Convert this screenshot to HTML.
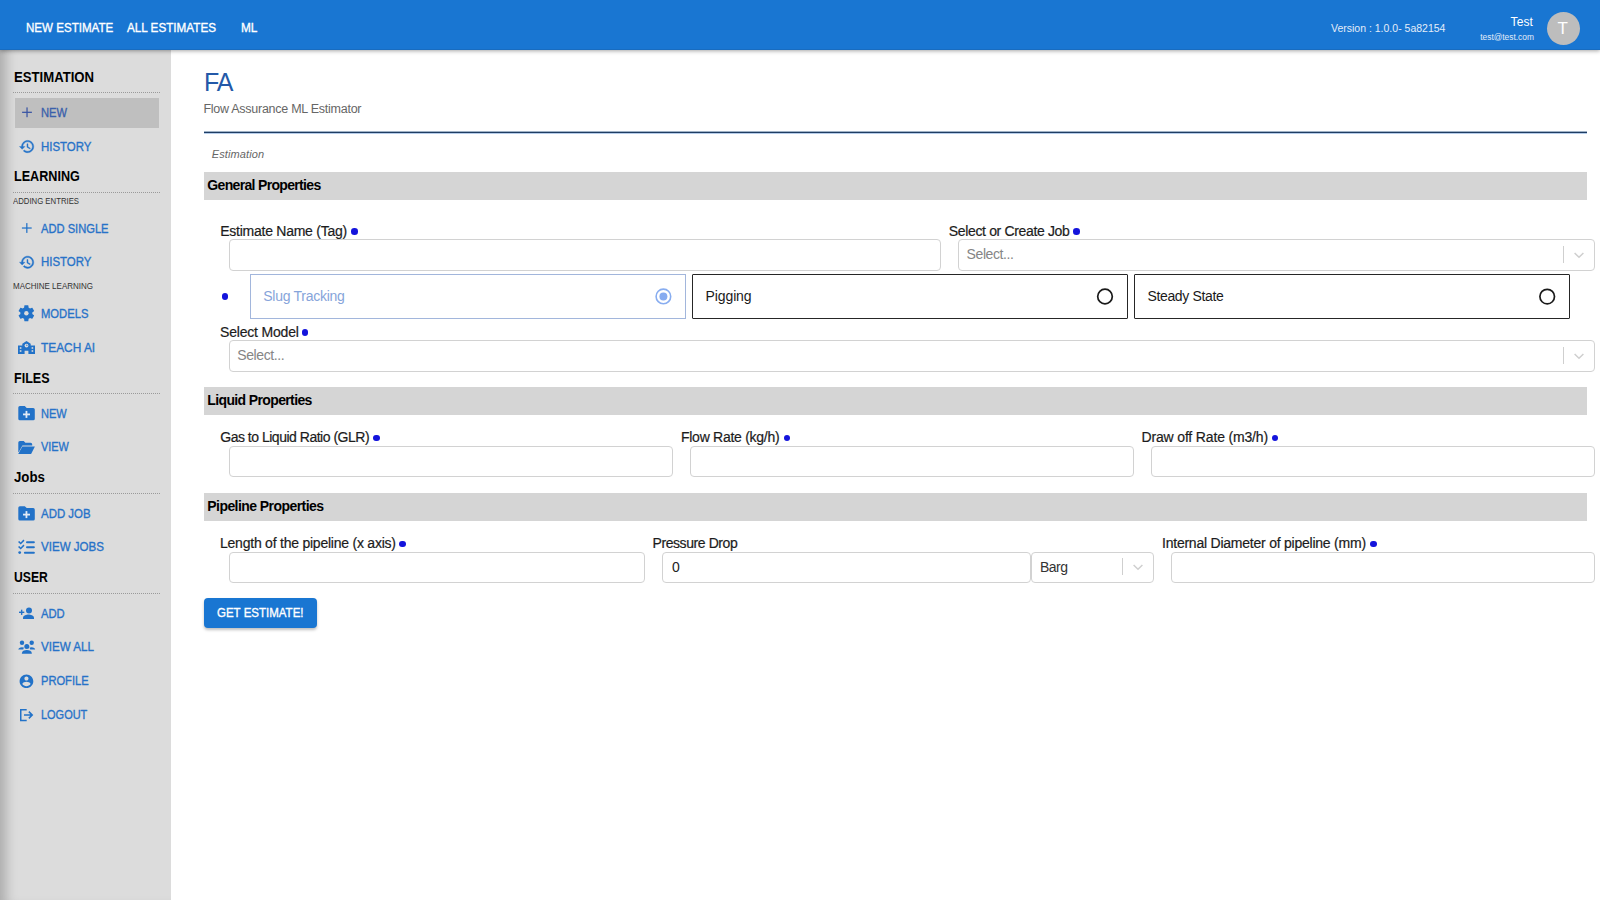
<!DOCTYPE html><html><head><meta charset="utf-8"><style>
*{box-sizing:border-box;margin:0;padding:0}
html,body{width:1600px;height:900px;overflow:hidden;background:#fff;font-family:"Liberation Sans",sans-serif}
body{position:relative}
.t{position:absolute;white-space:nowrap;line-height:1}
#hdr{position:absolute;left:0;top:0;width:1600px;height:50px;background:#1976d2;border-bottom:1px solid #186cc0;box-shadow:0 1px 4px rgba(0,0,0,.35);z-index:5}
.n{color:#fff;font-size:13px;font-weight:400;-webkit-text-stroke:.35px #fff;transform-origin:0 0}
#side{position:absolute;left:0;top:50px;width:171px;height:850px;background:#dcdcdc;box-shadow:inset 14px 0 12px -8px rgba(0,0,0,.22)}
.h{font-size:14px;font-weight:700;color:#000;transform-origin:0 0}
.dl{position:absolute;left:13px;width:147px;height:1px;background:repeating-linear-gradient(90deg,#9a9a9a 0 1px,transparent 1px 2px)}
.sub{font-size:9px;color:#333;transform-origin:0 0}
.it{font-size:13px;font-weight:400;color:#2772c8;-webkit-text-stroke:.35px currentColor;transform-origin:0 0}
.lbl{font-size:14px;color:#1c1c1c;-webkit-text-stroke:.2px currentColor}
.dot{position:absolute;width:6.6px;height:6.6px;border-radius:50%;background:#1414dc}
.inp{position:absolute;height:31px;border:1px solid #d2d2d2;border-radius:4px;background:#fff}
.band{position:absolute;left:204px;width:1383px;height:28px;background:#d5d5d5}
.bt{font-size:14px;font-weight:700;color:#000;transform-origin:0 0}
.sep{position:absolute;width:1px;height:17px;background:#cfcfcf}
.rb{position:absolute;top:274px;height:45px;border:1.6px solid #262626;border-radius:1px;background:#fff}
.ph{font-size:14px;color:#858585;letter-spacing:-.42px}
</style></head><body>
<div id="hdr">
<div class="t n" style="left:26.1px;top:21.2px;transform:scaleX(.89)">NEW ESTIMATE</div>
<div class="t n" style="left:126.8px;top:21.2px;transform:scaleX(.899)">ALL ESTIMATES</div>
<div class="t n" style="left:241px;top:21.2px;transform:scaleX(.91)">ML</div>
<div class="t" style="left:1331px;top:23.12px;font-size:10.5px;color:#e3edf9">Version : 1.0.0- 5a82154</div>
<div class="t" style="left:1510.5px;top:15.95px;font-size:12px;color:#fff;letter-spacing:.15px">Test</div>
<div class="t" style="left:1480.3px;top:32.79px;font-size:8.4px;color:#e3edf9">test@test.com</div>
<div style="position:absolute;left:1546.5px;top:11.6px;width:33.4px;height:33.4px;border-radius:50%;background:#bdbdbd"></div>
<div class="t" style="left:1557.5px;top:19.82px;font-size:17px;color:#fff">T</div>
</div>
<div id="side"></div>
<div class="t h" style="left:13.5px;top:69.86px;transform:scaleX(0.938)">ESTIMATION</div>
<div class="t h" style="left:13.5px;top:169.46px;transform:scaleX(0.901)">LEARNING</div>
<div class="t h" style="left:13.5px;top:370.86px;transform:scaleX(0.895)">FILES</div>
<div class="t h" style="left:13.5px;top:470.36px;transform:scaleX(0.944)">Jobs</div>
<div class="t h" style="left:13.5px;top:570.36px;transform:scaleX(0.868)">USER</div>
<div class="dl" style="top:92px"></div>
<div class="dl" style="top:192px"></div>
<div class="dl" style="top:393px"></div>
<div class="dl" style="top:493px"></div>
<div class="dl" style="top:593px"></div>
<div style="position:absolute;left:15px;top:98px;width:144px;height:30px;background:#bfbfbf"></div>
<div class="t sub" style="left:13.4px;top:197.19px;transform:scaleX(0.863)">ADDING ENTRIES</div>
<div class="t sub" style="left:13.4px;top:282.39px;transform:scaleX(0.889)">MACHINE LEARNING</div>
<div class="t it" style="left:41.2px;top:106.2px;transform:scaleX(0.858);color:#3a5fab">NEW</div>
<div class="t it" style="left:41.2px;top:140.0px;transform:scaleX(0.880)">HISTORY</div>
<div class="t it" style="left:41.2px;top:221.6px;transform:scaleX(0.858)">ADD SINGLE</div>
<div class="t it" style="left:41.2px;top:255.4px;transform:scaleX(0.880)">HISTORY</div>
<div class="t it" style="left:41.2px;top:306.7px;transform:scaleX(0.865)">MODELS</div>
<div class="t it" style="left:41.2px;top:340.7px;transform:scaleX(0.914)">TEACH AI</div>
<div class="t it" style="left:41.2px;top:406.6px;transform:scaleX(0.850)">NEW</div>
<div class="t it" style="left:41.2px;top:440.4px;transform:scaleX(0.835)">VIEW</div>
<div class="t it" style="left:41.2px;top:506.6px;transform:scaleX(0.880)">ADD JOB</div>
<div class="t it" style="left:41.2px;top:540.4px;transform:scaleX(0.889)">VIEW JOBS</div>
<div class="t it" style="left:41.2px;top:606.8px;transform:scaleX(0.863)">ADD</div>
<div class="t it" style="left:41.2px;top:640.4px;transform:scaleX(0.892)">VIEW ALL</div>
<div class="t it" style="left:41.2px;top:674.3px;transform:scaleX(0.856)">PROFILE</div>
<div class="t it" style="left:41.2px;top:708.2px;transform:scaleX(0.843)">LOGOUT</div>
<svg style="position:absolute;left:0;top:0" width="171" height="900" viewBox="0 0 171 900" fill="#2272c8"><g fill="#3a55a4"><rect x="22.1" y="111.7" width="9.8" height="1.25"/><rect x="26.4" y="107.39999999999999" width="1.25" height="9.8"/></g><g fill="#2272c8"><rect x="21.9" y="227.4" width="9.8" height="1.25"/><rect x="26.2" y="223.1" width="1.25" height="9.8"/></g><path transform="translate(18.8 138.4) scale(.68)" stroke="#2272c8" stroke-width=".6" d="M13 3c-4.97 0-9 4.03-9 9H1l3.89 3.89.07.14L9 12H6c0-3.870 3.13-7 7-7s7 3.13 7 7-3.13 7-7 7c-1.93 0-3.68-.79-4.94-2.06l-1.42 1.42C8.27 19.99 10.51 21 13 21c4.97 0 9-4.03 9-9s-4.03-9-9-9zm-1 5v5l4.28 2.54.72-1.21-3.5-2.08V8H12z"/><path transform="translate(18.8 254.1) scale(.68)" stroke="#2272c8" stroke-width=".6" d="M13 3c-4.97 0-9 4.03-9 9H1l3.89 3.89.07.14L9 12H6c0-3.870 3.13-7 7-7s7 3.13 7 7-3.13 7-7 7c-1.93 0-3.68-.79-4.94-2.06l-1.42 1.42C8.27 19.99 10.51 21 13 21c4.97 0 9-4.03 9-9s-4.03-9-9-9zm-1 5v5l4.28 2.54.72-1.21-3.5-2.08V8H12z"/><path transform="translate(16.4 303.3) scale(.83)" d="M19.14 12.94c.04-.3.06-.61.06-.94 0-.32-.02-.64-.07-.94l2.03-1.58c.18-.14.23-.41.12-.61l-1.92-3.32c-.12-.22-.37-.29-.59-.22l-2.39.96c-.5-.38-1.03-.7-1.620-.94l-.36-2.54c-.04-.24-.24-.41-.48-.41h-3.84c-.24 0-.43.17-.47.41l-.36 2.54c-.59.24-1.13.57-1.62.94l-2.39-.96c-.22-.08-.47 0-.59.22L2.74 8.87c-.12.21-.08.47.12.61l2.03 1.58c-.05.3-.09.63-.09.94s.02.64.07.94l-2.03 1.58c-.18.14-.23.41-.12.61l1.92 3.32c.12.22.37.29.59.22l2.39-.96c.5.38 1.03.7 1.62.94l.36 2.54c.05.24.24.41.48.41h3.84c.24 0 .44-.17.47-.41l.36-2.54c.59-.24 1.13-.56 1.62-.94l2.39.96c.22.08.47 0 .59-.22l1.92-3.32c.12-.22.07-.47-.12-.61l-2.01-1.58z"/><circle cx="26.36" cy="313.26" r="2.2" fill="#dcdcdc"/><path d="M18 345.5h4.3v-1.8l4.2-2.7 4.2 2.7v1.8h4.3v8.5h-6.6v-3.2h-3.8v3.2H18z"/><g fill="#dcdcdc"><circle cx="26.5" cy="345.6" r="1.9"/><rect x="19.8" y="347.2" width="1.6" height="1.6"/><rect x="19.8" y="350.2" width="1.6" height="1.6"/><rect x="31.6" y="347.2" width="1.6" height="1.6"/><rect x="31.6" y="350.2" width="1.6" height="1.6"/></g><path fill="#2272c8" d="M26.3 344.6h.5v1h.9v.5h-1.4z"/><path d="M18.3 407.60q0-1.6 1.6-1.6h4.9l1.9 1.9h6.5q1.6 0 1.6 1.6v9.2q0 1.6-1.6 1.6H19.9q-1.6 0-1.6-1.6z"/><g fill="#e2ebf5"><rect x="25.55" y="410.90" width="1.8" height="7"/><rect x="23" y="413.50" width="7" height="1.8"/></g><path d="M18.3 507.80q0-1.6 1.6-1.6h4.9l1.9 1.9h6.5q1.6 0 1.6 1.6v9.2q0 1.6-1.6 1.6H19.9q-1.6 0-1.6-1.6z"/><g fill="#e2ebf5"><rect x="25.55" y="511.10" width="1.8" height="7"/><rect x="23" y="513.70" width="7" height="1.8"/></g><path d="M18.3 442.6q0-1.6 1.6-1.6h3.8l1.7 1.7h5.2q1.6 0 1.6 1.6v1.3h-9.8l-3.6 6.4h-.5z"/><path d="M22.3 446.4h12.6l-3.8 7.6h-12.9z"/><path d="M18 542l1.2-1.1 1.5 1.5 2.7-2.8 1.1 1.1-3.8 3.8z"/><path d="M18 547l1.2-1.1 1.5 1.5 2.7-2.8 1.1 1.1-3.8 3.8z"/><circle cx="19.7" cy="552.6" r="1.4"/><rect x="26" y="541.3" width="8.9" height="2" rx="1"/><rect x="26" y="546.3" width="8.9" height="2" rx="1"/><rect x="23.9" y="551.7" width="11" height="2" rx="1"/><rect x="19" y="611.6" width="5.3" height="1.4"/><rect x="20.95" y="609.7" width="1.4" height="5.2"/><circle cx="29" cy="610.6" r="3"/><path d="M23 619v-1.2c0-2.2 3.6-3.2 5.5-3.2s5.5 1 5.5 3.2v1.2z"/><circle cx="22" cy="642.7" r="2.2"/><circle cx="31.7" cy="642.7" r="2.2"/><circle cx="26.8" cy="646.4" r="2.5"/><path d="M18.3 649.6c0-1.5 1.6-2.4 3.7-2.4 .9 0 1.6.2 2.1.5-.5.5-.8 1.1-.8 1.9z"/><path d="M35.2 649.6c0-1.5-1.6-2.4-3.7-2.4-.9 0-1.6.2-2.1.5.5.5.8 1.1.8 1.9z"/><path d="M21.9 653.8v-.6c0-2 2.4-3.2 4.9-3.2s5 1.2 5 3.2v.6z"/><path transform="translate(18.23 673.03) scale(.685)" d="M12 2C6.48 2 2 6.48 2 12s4.48 10 10 10 10-4.48 10-10S17.52 2 12 2zm0 3c1.66 0 3 1.34 3 3s-1.34 3-3 3-3-1.34-3-3 1.34-3 3-3zm0 14.2c-2.5 0-4.71-1.28-6-3.22.03-1.99 4-3.08 6-3.08 1.99 0 5.970 1.09 6 3.08-1.29 1.94-3.5 3.22-6 3.22z"/><path d="M20 709h6.7v1.5h-5.2v9.3h5.2v1.5H20z"/><path d="M24 714.2h6.3l-2-2 1.1-1.1 3.9 3.9-3.9 3.9-1.1-1.1 2-2H24z"/></svg>
<div class="t" style="left:204px;top:69.95px;font-size:25px;color:#2459a8;letter-spacing:-1.2px">FA</div>
<div class="t" style="left:203.4px;top:102.52px;font-size:12.5px;color:#666;letter-spacing:-.26px">Flow Assurance ML Estimator</div>
<div style="position:absolute;left:204px;top:131px;width:1383px;height:3px;background:linear-gradient(#9fb2c6 0 1px,#1f3d63 1px 2px,#b6cdea 2px 3px)"></div>
<div class="t" style="left:211.8px;top:148.89px;font-size:11px;font-style:italic;color:#666;letter-spacing:.1px">Estimation</div>
<div class="band" style="top:172px"></div>
<div class="t bt" style="left:207.3px;top:177.96px;letter-spacing:-0.67px">General Properties</div>
<div class="band" style="top:387px"></div>
<div class="t bt" style="left:207.3px;top:392.66px;letter-spacing:-0.63px">Liquid Properties</div>
<div class="band" style="top:492.5px"></div>
<div class="t bt" style="left:207.3px;top:498.86px;letter-spacing:-0.56px">Pipeline Properties</div>
<div class="t lbl" style="left:220.3px;top:223.86px;letter-spacing:-0.26px">Estimate Name (Tag)</div>
<div class="dot" style="left:350.95px;top:228.39999999999998px"></div>
<div class="t lbl" style="left:948.8px;top:223.86px;letter-spacing:-0.35px">Select or Create Job</div>
<div class="dot" style="left:1072.95px;top:228.39999999999998px"></div>
<div class="t lbl" style="left:220.1px;top:324.86px;letter-spacing:-0.2px">Select Model</div>
<div class="dot" style="left:301.59999999999997px;top:329.4px"></div>
<div class="t lbl" style="left:220.25px;top:430.16px;letter-spacing:-0.49px">Gas to Liquid Ratio (GLR)</div>
<div class="dot" style="left:373.2px;top:434.7px"></div>
<div class="t lbl" style="left:681px;top:430.16px;letter-spacing:-0.27px">Flow Rate (kg/h)</div>
<div class="dot" style="left:783.7px;top:434.7px"></div>
<div class="t lbl" style="left:1141.5px;top:430.16px;letter-spacing:-0.16px">Draw off Rate (m3/h)</div>
<div class="dot" style="left:1271.8px;top:434.7px"></div>
<div class="t lbl" style="left:220px;top:536.26px;letter-spacing:-0.23px">Length of the pipeline (x axis)</div>
<div class="dot" style="left:399.3px;top:540.8000000000001px"></div>
<div class="t lbl" style="left:652.5px;top:536.26px;letter-spacing:-0.42px">Pressure Drop</div>
<div class="t lbl" style="left:1162px;top:536.26px;letter-spacing:-0.23px">Internal Diameter of pipeline (mm)</div>
<div class="dot" style="left:1370.2px;top:540.8000000000001px"></div>
<div class="inp" style="left:229px;top:239px;width:712px;height:32px"></div>
<div class="inp" style="left:957.5px;top:239px;width:637.5px;height:32px"></div>
<div class="inp" style="left:229px;top:340px;width:1366px;height:32px"></div>
<div class="inp" style="left:229px;top:446px;width:444px;height:31px"></div>
<div class="inp" style="left:690px;top:446px;width:444px;height:31px"></div>
<div class="inp" style="left:1151px;top:446px;width:444px;height:31px"></div>
<div class="inp" style="left:229px;top:551.5px;width:416px;height:31.5px"></div>
<div class="inp" style="left:662px;top:551.5px;width:369px;height:31.5px"></div>
<div class="inp" style="left:1031px;top:551.5px;width:123px;height:31.5px"></div>
<div class="inp" style="left:1171px;top:551.5px;width:424px;height:31.5px"></div>
<div class="sep" style="left:1563px;top:246px"></div>
<svg style="position:absolute;left:1574px;top:252px" width="10" height="7" viewBox="0 0 10 7"><path d="M.6 1 5 5.3 9.4 1" fill="none" stroke="#cfcfcf" stroke-width="1.5"/></svg>
<div class="sep" style="left:1563px;top:347px"></div>
<svg style="position:absolute;left:1574px;top:353px" width="10" height="7" viewBox="0 0 10 7"><path d="M.6 1 5 5.3 9.4 1" fill="none" stroke="#cfcfcf" stroke-width="1.5"/></svg>
<div class="sep" style="left:1122px;top:558px"></div>
<svg style="position:absolute;left:1133px;top:564px" width="10" height="7" viewBox="0 0 10 7"><path d="M.6 1 5 5.3 9.4 1" fill="none" stroke="#cfcfcf" stroke-width="1.5"/></svg>
<div class="t ph" style="left:966.6px;top:246.96px">Select...</div>
<div class="t ph" style="left:237.3px;top:347.86px">Select...</div>
<div class="t" style="left:672px;top:559.86px;font-size:14px;color:#222">0</div>
<div class="t" style="left:1040px;top:559.86px;font-size:14px;color:#333;letter-spacing:-.5px">Barg</div>
<div class="dot" style="left:221.7px;top:293px"></div>
<div class="rb" style="left:250px;width:436px;border:1px solid #a2b6dc;border-radius:0"></div>
<div class="rb" style="left:692.2px;width:435.8px"></div>
<div class="rb" style="left:1134px;width:436px"></div>
<div class="t" style="left:263.3px;top:289.06px;font-size:14px;color:#86a4da;letter-spacing:-.27px">Slug Tracking</div>
<div class="t" style="left:705.6px;top:289.06px;font-size:14px;color:#1a1a1a;letter-spacing:-.12px">Pigging</div>
<div class="t" style="left:1147.5px;top:289.06px;font-size:14px;color:#1a1a1a;letter-spacing:-.36px">Steady State</div>
<svg style="position:absolute;left:0;top:0" width="1600" height="900" viewBox="0 0 1600 900"><circle cx="663.4" cy="296.4" r="7.3" fill="none" stroke="#88adf0" stroke-width="1.6"/><circle cx="663.4" cy="296.4" r="4" fill="#86abf0"/><circle cx="1105" cy="296.5" r="7.3" fill="none" stroke="#1a1a1a" stroke-width="1.7"/><circle cx="1547.2" cy="296.6" r="7.3" fill="none" stroke="#1a1a1a" stroke-width="1.7"/></svg>
<div style="position:absolute;left:204px;top:598px;width:113px;height:30px;background:#1976d2;border-radius:4px;box-shadow:0 2px 3px rgba(0,0,0,.25)"></div>
<div class="t" style="left:217.2px;top:606.2px;font-size:13px;font-weight:400;-webkit-text-stroke:.35px #fff;color:#fff;transform-origin:0 0;transform:scaleX(.885)">GET ESTIMATE!</div>
</body></html>
